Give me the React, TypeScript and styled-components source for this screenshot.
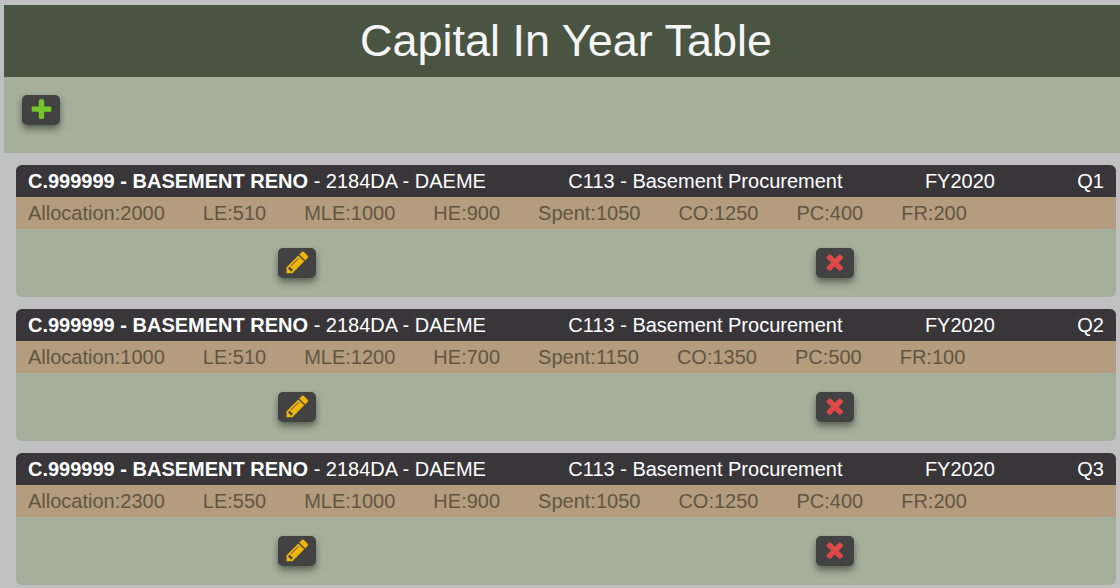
import React from "react";
import styled, { createGlobalStyle } from "styled-components";

const GlobalStyle = createGlobalStyle`
  *, *::before, *::after { box-sizing: border-box; }
  body {
    margin: 0;
    background: #c0c0c0;
    color: #ffffff;
    font-family: "Liberation Sans", Arial, Helvetica, sans-serif;
    font-size: 20px;
    line-height: 32px;
  }
`;

const Page = styled.main`
  padding: 5px 0 3px 4px;
`;

const Banner = styled.header`
  padding: 0 0 0 8px;
  background: #4a5442;
`;

const Title = styled.h1`
  margin: 0;
  color: #f5f5f5;
  font-size: 45px;
  font-weight: 400;
  line-height: 72px;
  text-align: center;
`;

const Toolbar = styled.div`
  display: flex;
  padding: 18px 18px 28px;
  background: #a4b09c;
`;

const CardList = styled.ul`
  display: flex;
  flex-direction: column;
  gap: 12px;
  margin: 0;
  padding: 12px 4px 0 12px;
  list-style: none;
`;

const Card = styled.li`
  overflow: hidden;
  border-radius: 6px;
  background: #a4b09c;
`;

const CardHeader = styled.div`
  display: flex;
  justify-content: space-between;
  padding: 0 12px;
  background: #39363a;
`;

const Figures = styled.div`
  display: flex;
  gap: 38px;
  padding: 0 12px;
  background: #b49c7e;
  color: #615642;
`;

const Actions = styled.div`
  display: grid;
  grid-template-columns: 1fr 1fr;
  justify-items: center;
  padding: 19px 12px;
`;

const IconButton = styled.button<{ $color: string }>`
  display: flex;
  align-items: center;
  justify-content: center;
  width: 38px;
  height: 30px;
  padding: 0 0 2px;
  border: 0;
  border-radius: 5px;
  background: #424242;
  box-shadow: 0 4px 7px rgba(0, 0, 0, 0.45);
  color: ${({ $color }) => $color};
  cursor: pointer;
`;

const Glyph = styled.svg`
  display: block;
  flex: none;
  width: 25px;
  height: 25px;
  fill: currentColor;
`;

const icons = {
  plus: {
    viewBox: "0 -36 1792 1792",
    path: "M1600 736v192q0 40-28 68t-68 28h-416v416q0 40-28 68t-68 28h-192q-40 0-68-28t-28-68v-416h-416q-40 0-68-28t-28-68v-192q0-40 28-68t68-28h416v-416q0-40 28-68t68-28h192q40 0 68 28t28 68v416h416q40 0 68 28t28 68z",
  },
  pencil: {
    viewBox: "20 36 1760 1760",
    path: "M491 1536l91-91-235-235-91 91v107h128v128h107zm523-928q0-22-22-22-10 0-17 7l-542 542q-7 7-7 17 0 22 22 22 10 0 17-7l542-542q7-7 7-17zm-54-192l416 416-832 832h-416v-416zm683 96q0 53-37 90l-166 166-416-416 166-165q36-38 90-38 53 0 91 38l235 234q37 39 37 91z",
  },
  times: {
    viewBox: "50 54 1792 1792",
    path: "M1490 1322q0 40-28 68l-136 136q-28 28-68 28t-68-28l-294-294-294 294q-28 28-68 28t-68-28l-136-136q-28-28-28-68t28-68l294-294-294-294q-28-28-28-68t28-68l136-136q28-28 68-28t68 28l294 294 294-294q28-28 68-28t68 28l136 136q28 28 28 68t-28 68l-294 294 294 294q28 28 28 68z",
  },
};

function Action({ icon, label, color }: { icon: keyof typeof icons; label: string; color: string }) {
  return (
    <IconButton type="button" aria-label={label} $color={color}>
      <Glyph viewBox={icons[icon].viewBox} aria-hidden="true">
        <path d={icons[icon].path} />
      </Glyph>
    </IconButton>
  );
}

const entries = [
  { quarter: "Q1", figures: { Allocation: 2000, LE: 510, MLE: 1000, HE: 900, Spent: 1050, CO: 1250, PC: 400, FR: 200 } },
  { quarter: "Q2", figures: { Allocation: 1000, LE: 510, MLE: 1200, HE: 700, Spent: 1150, CO: 1350, PC: 500, FR: 100 } },
  { quarter: "Q3", figures: { Allocation: 2300, LE: 550, MLE: 1000, HE: 900, Spent: 1050, CO: 1250, PC: 400, FR: 200 } },
];

export default function App() {
  return (
    <>
      <GlobalStyle />
      <Page>
        <Banner>
          <Title>Capital In Year Table</Title>
        </Banner>
        <Toolbar>
          <Action icon="plus" label="Add entry" color="#76c62b" />
        </Toolbar>
        <CardList>
          {entries.map(({ quarter, figures }) => (
            <Card key={quarter}>
              <CardHeader>
                <span>
                  <strong>C.999999 - BASEMENT RENO</strong> - 2184DA - DAEME
                </span>
                <span>C113 - Basement Procurement</span>
                <span>FY2020</span>
                <span>{quarter}</span>
              </CardHeader>
              <Figures>
                {Object.entries(figures).map(([name, value]) => (
                  <span key={name}>{`${name}:${value}`}</span>
                ))}
              </Figures>
              <Actions>
                <Action icon="pencil" label={`Edit ${quarter}`} color="#f0b40f" />
                <Action icon="times" label={`Delete ${quarter}`} color="#e04848" />
              </Actions>
            </Card>
          ))}
        </CardList>
      </Page>
    </>
  );
}
